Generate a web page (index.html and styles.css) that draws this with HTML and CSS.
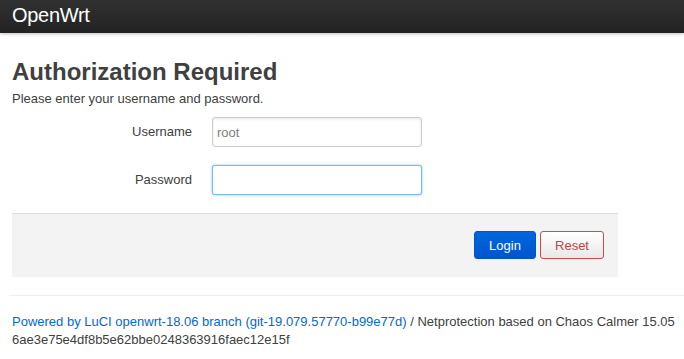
FILE: index.html
```html
<!DOCTYPE html>
<html lang="en">
<head>
    <meta charset="UTF-8">
    <meta name="viewport" content="width=device-width, initial-scale=1.0">
    <title>OpenWrt - LuCI</title>
    <link rel="stylesheet" href="styles.css">
</head>
<body>
    <header class="topbar">
        <a class="brand" href="#">OpenWrt</a>
    </header>

    <div class="container">
        <form class="login-form">
            <h2>Authorization Required</h2>
            <p class="intro">Please enter your username and password.</p>

            <div class="fields">
                <div class="field-row">
                    <label class="field-title" for="username">Username</label>
                    <input class="field-input" id="username" type="text" value="root">
                </div>
                <div class="field-row">
                    <label class="field-title" for="password">Password</label>
                    <input class="field-input focused" id="password" type="password">
                </div>
            </div>

            <div class="page-actions">
                <button type="button" class="btn btn-primary">Login</button>
                <button type="reset" class="btn btn-reset">Reset</button>
            </div>
        </form>

        <footer class="footer">
            <a href="#">Powered by LuCI openwrt-18.06 branch (git-19.079.57770-b99e77d)</a> / Netprotection based on Chaos Calmer 15.05<br>
            6ae3e75e4df8b5e62bbe0248363916faec12e15f
        </footer>
    </div>
</body>
</html>
```

FILE: styles.css
```css
* {
    box-sizing: border-box;
}

body {
    margin: 0;
    font-family: "Liberation Sans", Arial, sans-serif;
    font-size: 13px;
    line-height: 18px;
    color: #404040;
    background: #fff;
}

a {
    color: #0069d6;
    text-decoration: none;
}

/* Top bar */
.topbar {
    height: 36px;
    padding: 0 12px;
    background: linear-gradient(#333333, #222222);
    box-shadow: 0 1px 3px rgba(0, 0, 0, 0.25);
}

.brand {
    display: block;
    color: #fff;
    font-size: 20px;
    line-height: 36px;
    letter-spacing: -0.3px;
    margin-top: -3px;
}

/* Content */
.container {
    padding-left: 12px;
}

.login-form {
    width: 606px;
}

h2 {
    margin: 25px 0 4px;
    font-size: 24px;
    line-height: 28px;
    font-weight: bold;
    color: #404040;
}

.intro {
    margin: 0;
}

.fields {
    margin-top: 9px;
}

.field-row {
    display: flex;
    margin-bottom: 18px;
}

.field-title {
    width: 180px;
    padding-top: 6px;
    text-align: right;
}

.field-input {
    width: 210px;
    height: 30px;
    margin-left: 20px;
    padding: 4px;
    font-family: inherit;
    font-size: 13px;
    color: #808080;
    border: 1px solid #cccccc;
    border-radius: 3px;
    box-shadow: inset 0 1px 3px rgba(0, 0, 0, 0.1);
    outline: none;
}

.field-input.focused {
    border-color: rgba(82, 168, 236, 0.8);
    box-shadow: 0 0 3px rgba(82, 168, 236, 0.6);
}

/* Actions bar */
.page-actions {
    display: flex;
    justify-content: flex-end;
    gap: 4px;
    padding: 17px 14px 18px;
    background: #f3f3f3;
    border-top: 1px solid #dddddd;
}

.btn {
    height: 28px;
    padding: 0 14px;
    font-family: inherit;
    font-size: 13px;
    border-radius: 3px;
    cursor: pointer;
}

.btn-primary {
    width: 62px;
    color: #fff;
    background: linear-gradient(#0066dd, #0055cc);
    border: 1px solid #0055c8;
}

.btn-reset {
    width: 64px;
    color: #c44444;
    background: linear-gradient(#ffffff, #e8e8e8);
    border: 1px solid #d44848;
}

/* Footer */
.footer {
    margin: 18px 0 0 -3px;
    padding: 17px 0 0 3px;
    border-top: 1px solid #eeeeee;
}
```
